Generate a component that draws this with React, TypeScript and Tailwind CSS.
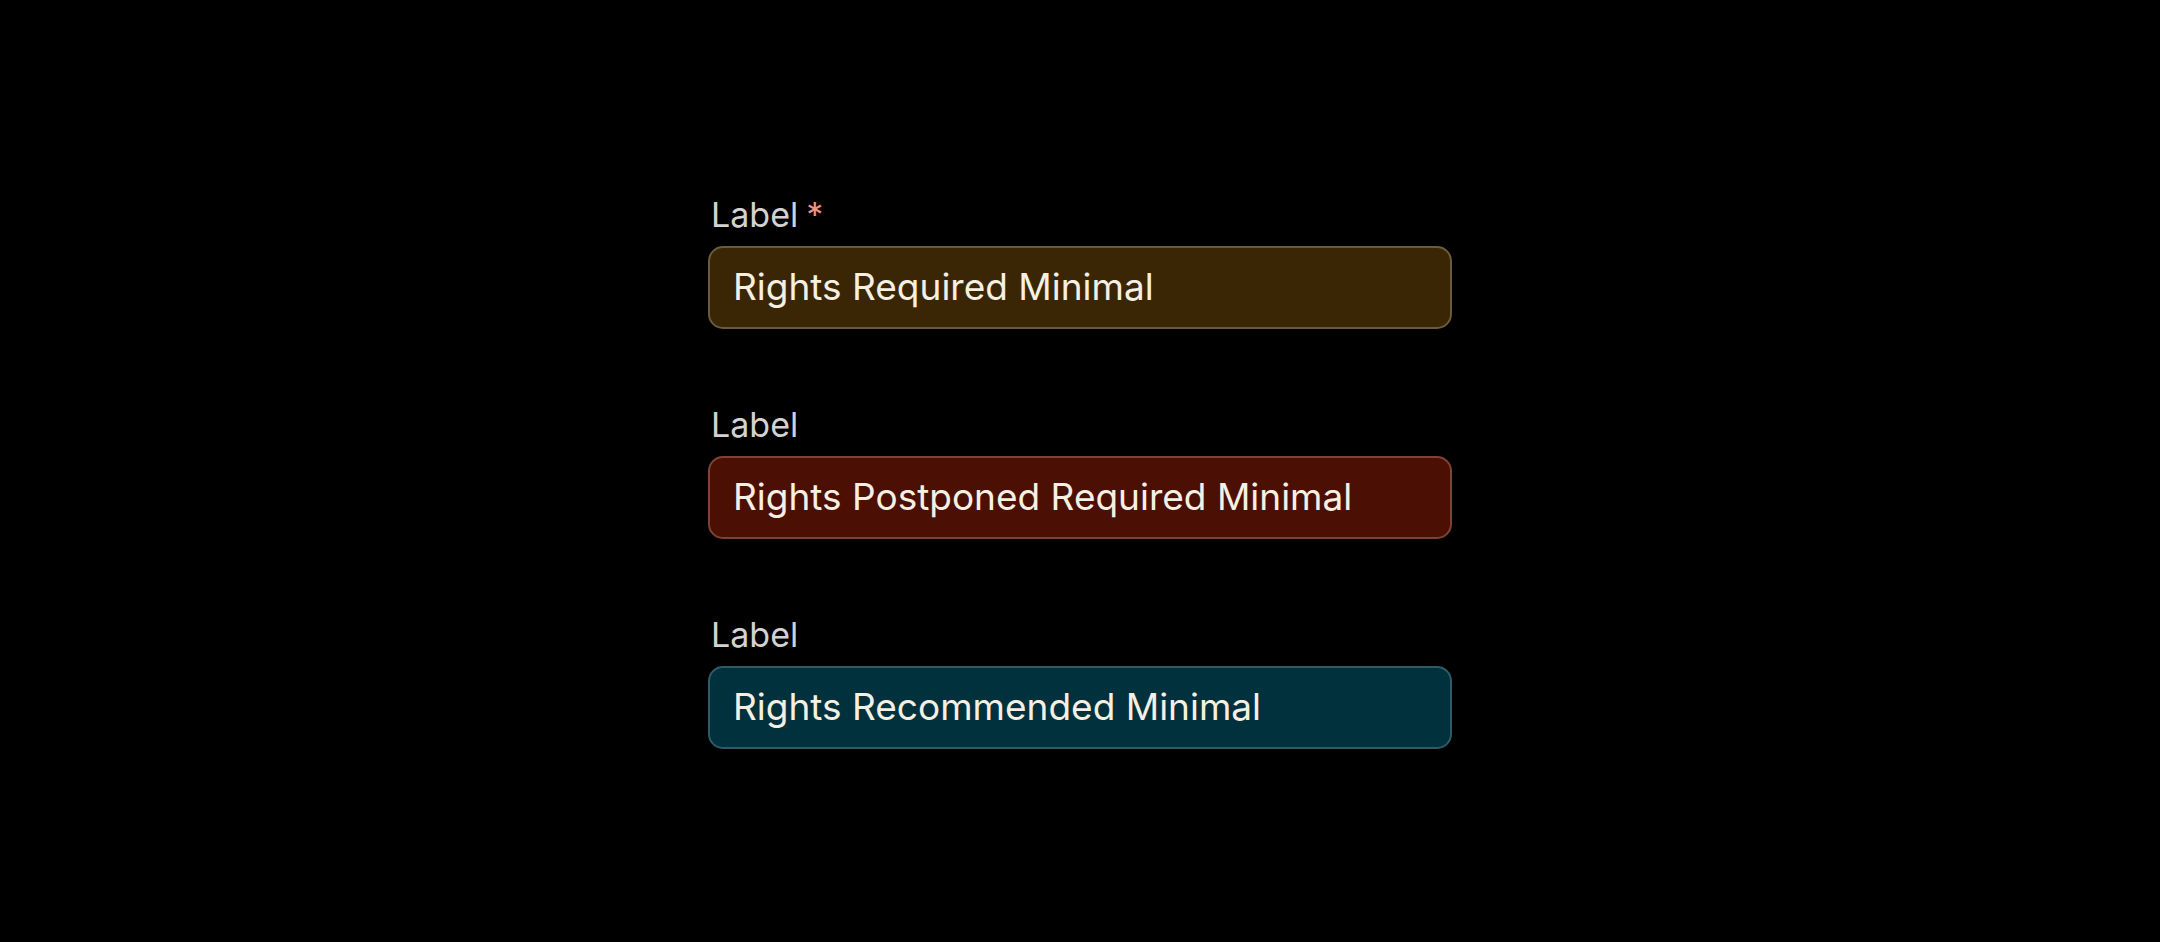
const fields = [
  {
    label: 'Label',
    required: true,
    value: 'Rights Required Minimal',
    box: 'bg-[#3a2605] border-[#6b5b3e]',
  },
  {
    label: 'Label',
    required: false,
    value: 'Rights Postponed Required Minimal',
    box: 'bg-[#4b0f03] border-[#7c4437]',
  },
  {
    label: 'Label',
    required: false,
    value: 'Rights Recommended Minimal',
    box: 'bg-[#00313d] border-[#2d5b66]',
  },
];

export default function App() {
  return (
    <div className="min-h-screen w-full bg-black flex items-center justify-center font-['Inter',sans-serif]">
      <div className="w-[744px] flex flex-col gap-[75px]">
        {fields.map((f, i) => (
          <div key={i} className="flex flex-col gap-[11px]">
            <label className="text-[34px] leading-[41px] text-[#d2d2d2] pl-[3px]">
              {f.label}
              {f.required && <span className="text-[#f0907e] ml-[8px]">*</span>}
            </label>
            <div
              className={`h-[83px] rounded-[15px] border-2 flex items-center pl-[23px] ${f.box}`}
            >
              <span className="text-[37px] text-[#f6f0e2]">{f.value}</span>
            </div>
          </div>
        ))}
      </div>
    </div>
  );
}
